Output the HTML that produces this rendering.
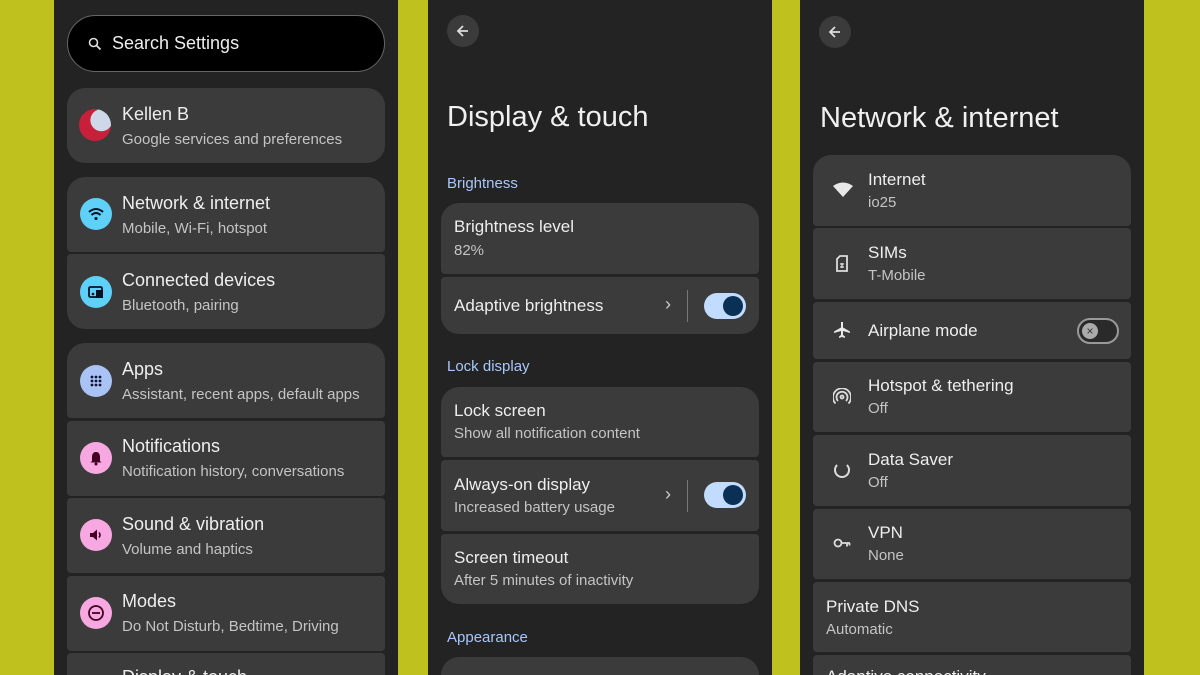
<!DOCTYPE html><html><head><style>
*{margin:0;padding:0;box-sizing:border-box}
html,body{width:1200px;height:675px;overflow:hidden}
body{background:#bfc11f;position:relative;font-family:"Liberation Sans",sans-serif;color:#e6e6e6}
.p{position:absolute;top:0;height:675px;width:344px;background:#232323;overflow:hidden}
.c{position:absolute;background:#3b3b3b;border-radius:4px}
.r1{border-top-left-radius:18px;border-top-right-radius:18px}
.r2{border-bottom-left-radius:18px;border-bottom-right-radius:18px}
.t{position:absolute;font-size:18px;color:#eee}
.s{position:absolute;font-size:15px;color:#c4c4c4}
.ic{position:absolute;width:32px;height:32px;border-radius:50%}
.ic svg{position:absolute;left:6px;top:6px}
.lbl{position:absolute;font-size:15px;color:#a8c7fa}
.h{position:absolute;font-size:29px;color:#f0f0f0}
.back{position:absolute;width:32px;height:32px;border-radius:50%;background:#3b3b3b}
.back svg{position:absolute;left:8px;top:8px}
.clip{position:absolute;overflow:hidden;line-height:1}
</style></head><body>
<div class="p" style="left:54px">
<div style="position:absolute;left:13px;top:15px;width:318px;height:57px;border-radius:29px;background:#000;border:1px solid #666"></div>
<svg style="position:absolute;left:34px;top:37px" width="14" height="14" viewBox="0 0 14 14"><circle cx="5.5" cy="5.5" r="4" stroke="#ddd" stroke-width="1.6" fill="none"/><line x1="8.5" y1="8.5" x2="12.5" y2="12.5" stroke="#ddd" stroke-width="1.8"/></svg>
<div class="t" style="left:58px;top:33px">Search Settings</div>
<div class="c r1 r2" style="left:13px;top:88px;width:318px;height:75px"></div>
<div class="ic" style="left:25px;top:109px;background:radial-gradient(circle at 70% 35%,#cfd8e8 35%,#c8203a 37%)"></div>
<div class="t" style="left:68px;top:104px">Kellen B</div><div class="s" style="left:68px;top:131px">Google services and preferences</div>
<div class="c r1" style="left:13px;top:177px;width:318px;height:75px"></div>
<div class="c r2" style="left:13px;top:254px;width:318px;height:75px"></div>
<div class="c r1" style="left:13px;top:343px;width:318px;height:75px"></div>
<div class="c" style="left:13px;top:421px;width:318px;height:75px"></div>
<div class="c" style="left:13px;top:498px;width:318px;height:75px"></div>
<div class="c" style="left:13px;top:576px;width:318px;height:75px"></div>
<div class="c" style="left:13px;top:653px;width:318px;height:22px;border-radius:4px 4px 0 0"></div>
<div class="ic" style="left:26px;top:198px;background:#5fd0f8"><svg width="20" height="20" viewBox="0 0 20 20" fill="none" stroke="#012" stroke-width="2"><path d="M3 8Q10 2 17 8M5.5 11Q10 7 14.5 11"/><circle cx="10" cy="14.5" r="1.5" fill="#012" stroke="none"/></svg></div>
<div class="t" style="left:68px;top:193px">Network &amp; internet</div><div class="s" style="left:68px;top:220px">Mobile, Wi-Fi, hotspot</div>
<div class="ic" style="left:26px;top:276px;background:#5fd0f8"><svg width="20" height="20" viewBox="0 0 20 20"><rect x="3" y="5" width="13" height="10" rx="1.5" fill="none" stroke="#012" stroke-width="1.8"/><rect x="10" y="8" width="7" height="8" fill="#012"/><circle cx="7" cy="12" r="1.3" fill="#012"/></svg></div>
<div class="t" style="left:68px;top:270px">Connected devices</div><div class="s" style="left:68px;top:297px">Bluetooth, pairing</div>
<div class="ic" style="left:26px;top:365px;background:#a9c3f5"><svg width="20" height="20" viewBox="0 0 20 20" fill="#113"><circle cx="6" cy="6" r="1.4"/><circle cx="10" cy="6" r="1.4"/><circle cx="14" cy="6" r="1.4"/><circle cx="6" cy="10" r="1.4"/><circle cx="10" cy="10" r="1.4"/><circle cx="14" cy="10" r="1.4"/><circle cx="6" cy="14" r="1.4"/><circle cx="10" cy="14" r="1.4"/><circle cx="14" cy="14" r="1.4"/></svg></div>
<div class="t" style="left:68px;top:359px">Apps</div><div class="s" style="left:68px;top:386px">Assistant, recent apps, default apps</div>
<div class="ic" style="left:26px;top:442px;background:#f7a8e0"><svg width="20" height="20" viewBox="0 0 20 20" fill="#402"><path d="M10 4C7 4 6 6.5 6 9V13L4.5 14.5H15.5L14 13V9C14 6.5 13 4 10 4Z"/><circle cx="10" cy="16" r="1.5"/></svg></div>
<div class="t" style="left:68px;top:436px">Notifications</div><div class="s" style="left:68px;top:463px">Notification history, conversations</div>
<div class="ic" style="left:26px;top:519px;background:#f7a8e0"><svg width="20" height="20" viewBox="0 0 20 20" fill="#402"><path d="M4 8H7L11 4.5V15.5L7 12H4Z"/><path d="M13 7.5Q15 10 13 12.5" fill="none" stroke="#402" stroke-width="1.6"/></svg></div>
<div class="t" style="left:68px;top:514px">Sound &amp; vibration</div><div class="s" style="left:68px;top:541px">Volume and haptics</div>
<div class="ic" style="left:26px;top:597px;background:#f7a8e0"><svg width="20" height="20" viewBox="0 0 20 20" fill="none" stroke="#402" stroke-width="1.8"><circle cx="10" cy="10" r="7"/><line x1="6" y1="10" x2="14" y2="10"/></svg></div>
<div class="t" style="left:68px;top:591px">Modes</div><div class="s" style="left:68px;top:618px">Do Not Disturb, Bedtime, Driving</div>
<div class="clip t" style="left:68px;top:668px;height:7px">Display &amp; touch</div>
</div>

<div class="p" style="left:428px">
<div class="back" style="left:19px;top:15px"><svg width="16" height="16" viewBox="0 0 16 16" fill="none" stroke="#ddd" stroke-width="1.8"><path d="M13 8H3M8 3L3 8L8 13"/></svg></div>
<div class="h" style="left:19px;top:101px">Display &amp; touch</div>
<div class="lbl" style="left:19px;top:175px">Brightness</div>
<div class="c r1" style="left:13px;top:203px;width:318px;height:71px"></div>
<div class="c r2" style="left:13px;top:277px;width:318px;height:57px"></div>
<div class="t" style="left:26px;top:217px;font-size:17px">Brightness level</div><div class="s" style="left:26px;top:242px">82%</div>
<div class="t" style="left:26px;top:296px;font-size:17px">Adaptive brightness</div>
<div class="s" style="left:237px;top:294px;font-size:18px;color:#ccc">›</div>
<div style="position:absolute;left:259px;top:290px;width:1px;height:32px;background:#777"></div>
<div style="position:absolute;left:276px;top:293px;width:42px;height:26px;border-radius:13px;background:#c2dcff"><div style="position:absolute;right:3px;top:3px;width:20px;height:20px;border-radius:50%;background:#0b3055"></div></div>
<div class="lbl" style="left:19px;top:358px">Lock display</div>
<div class="c r1" style="left:13px;top:387px;width:318px;height:70px"></div>
<div class="c" style="left:13px;top:460px;width:318px;height:71px"></div>
<div class="c r2" style="left:13px;top:534px;width:318px;height:70px"></div>
<div class="t" style="left:26px;top:401px;font-size:17px">Lock screen</div><div class="s" style="left:26px;top:425px">Show all notification content</div>
<div class="t" style="left:26px;top:475px;font-size:17px">Always-on display</div><div class="s" style="left:26px;top:499px">Increased battery usage</div>
<div class="s" style="left:237px;top:484px;font-size:18px;color:#ccc">›</div>
<div style="position:absolute;left:259px;top:480px;width:1px;height:32px;background:#777"></div>
<div style="position:absolute;left:276px;top:482px;width:42px;height:26px;border-radius:13px;background:#c2dcff"><div style="position:absolute;right:3px;top:3px;width:20px;height:20px;border-radius:50%;background:#0b3055"></div></div>
<div class="t" style="left:26px;top:548px;font-size:17px">Screen timeout</div><div class="s" style="left:26px;top:572px">After 5 minutes of inactivity</div>
<div class="lbl" style="left:19px;top:629px">Appearance</div>
<div class="c" style="left:13px;top:657px;width:318px;height:18px;border-radius:18px 18px 0 0"></div>
</div>

<div class="p" style="left:800px">
<div class="back" style="left:19px;top:16px"><svg width="16" height="16" viewBox="0 0 16 16" fill="none" stroke="#ddd" stroke-width="1.8"><path d="M13 8H3M8 3L3 8L8 13"/></svg></div>
<div class="h" style="left:20px;top:102px">Network &amp; internet</div>
<div class="c r1" style="left:13px;top:155px;width:318px;height:71px"></div>
<div class="c" style="left:13px;top:228px;width:318px;height:71px"></div>
<div class="c" style="left:13px;top:302px;width:318px;height:57px"></div>
<div class="c" style="left:13px;top:362px;width:318px;height:70px"></div>
<div class="c" style="left:13px;top:435px;width:318px;height:71px"></div>
<div class="c" style="left:13px;top:509px;width:318px;height:70px"></div>
<div class="c" style="left:13px;top:582px;width:318px;height:70px"></div>
<div class="c" style="left:13px;top:655px;width:318px;height:20px;border-radius:4px 4px 0 0"></div>
<svg style="position:absolute;left:33px;top:182px" width="20" height="15" viewBox="0 0 20 15"><path d="M0 4Q10 -3 20 4L10 15Z" fill="#e8e8e8"/></svg>
<div class="t" style="left:68px;top:170px;font-size:17px">Internet</div><div class="s" style="left:68px;top:194px">io25</div>
<svg style="position:absolute;left:35px;top:255px" width="14" height="17" viewBox="0 0 14 17" fill="none" stroke="#ddd" stroke-width="1.8"><path d="M5 1H12V16H2V4Z"/><path d="M5 9H9M5 12H9M7 8V13" stroke-width="1.3"/></svg>
<div class="t" style="left:68px;top:243px;font-size:17px">SIMs</div><div class="s" style="left:68px;top:267px">T-Mobile</div>
<svg style="position:absolute;left:33px;top:321px" width="18" height="18" viewBox="0 0 18 18" fill="#e8e8e8"><path d="M8 1H10V6.5L17 10.5V12L10 10V14L12 15.5V17L9 16L6 17V15.5L8 14V10L1 12V10.5L8 6.5Z"/></svg>
<div class="t" style="left:68px;top:321px;font-size:17px">Airplane mode</div>
<div style="position:absolute;left:277px;top:318px;width:42px;height:26px;border-radius:13px;border:2px solid #999;background:#2a2a2a"><div style="position:absolute;left:3px;top:3px;width:16px;height:16px;border-radius:50%;background:#aaa;color:#333;font-size:12px;text-align:center;line-height:16px">×</div></div>
<svg style="position:absolute;left:33px;top:388px" width="18" height="18" viewBox="0 0 18 18" fill="none" stroke="#ddd" stroke-width="1.8"><circle cx="9" cy="9" r="1.5"/><path d="M5 13A5.5 5.5 0 1 1 13 13M2.5 15.5A9 9 0 1 1 15.5 15.5"/></svg>
<div class="t" style="left:68px;top:376px;font-size:17px">Hotspot &amp; tethering</div><div class="s" style="left:68px;top:400px">Off</div>
<div style="position:absolute;left:34px;top:462px;width:16px;height:16px;border:2px solid #ddd;border-radius:50%;border-top-color:transparent"></div>
<div class="t" style="left:68px;top:450px;font-size:17px">Data Saver</div><div class="s" style="left:68px;top:474px">Off</div>
<svg style="position:absolute;left:33px;top:537px" width="18" height="12" viewBox="0 0 18 12" fill="none" stroke="#ddd" stroke-width="1.8"><circle cx="5" cy="6" r="3.5"/><path d="M8.5 6H17M14 6V9.5M16.5 6V8.5"/></svg>
<div class="t" style="left:68px;top:523px;font-size:17px">VPN</div><div class="s" style="left:68px;top:547px">None</div>
<div class="t" style="left:26px;top:597px;font-size:17px">Private DNS</div><div class="s" style="left:26px;top:621px">Automatic</div>
<div class="clip t" style="left:26px;top:668px;font-size:17px;height:7px">Adaptive connectivity</div>
</div>
</body></html>
